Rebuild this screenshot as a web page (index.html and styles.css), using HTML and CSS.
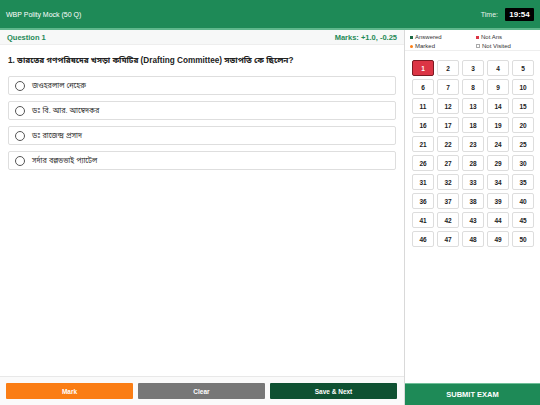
FILE: index.html
```html
<!DOCTYPE html>
<html>
<head>
<meta charset="utf-8">
<link rel="stylesheet" href="styles.css">
</head>
<body>
<div class="app">
  <header class="topbar">
    <div class="title">WBP Polity Mock (50 Q)</div>
    <div class="timer"><span class="time-label">Time:</span><span class="time-box">19:54</span></div>
  </header>
  <div class="main">
    <section class="qpanel">
      <div class="qhead"><span>Question 1</span><span>Marks: +1.0, -0.25</span></div>
      <div class="qbody">
        <div class="qtext">1. ভারতের গণপরিষদের খসড়া কমিটির (Drafting Committee) সভাপতি কে ছিলেন?</div>
        <div class="options">
          <label class="opt"><span class="radio"></span><span>জওহরলাল নেহেরু</span></label>
          <label class="opt"><span class="radio"></span><span>ডঃ বি. আর. আম্বেদকর</span></label>
          <label class="opt"><span class="radio"></span><span>ডঃ রাজেন্দ্র প্রসাদ</span></label>
          <label class="opt"><span class="radio"></span><span>সর্দার বল্লভভাই প্যাটেল</span></label>
        </div>
      </div>
      <div class="actions">
        <button class="btn mark">Mark</button>
        <button class="btn clear">Clear</button>
        <button class="btn next">Save &amp; Next</button>
      </div>
    </section>
    <aside class="side">
      <div class="legend">
        <div><span class="dot d-ans"></span>Answered</div>
        <div><span class="dot d-not"></span>Not Ans</div>
        <div><span class="dot d-mark"></span>Marked</div>
        <div><span class="dot d-nv"></span>Not Visited</div>
      </div>
      <div class="grid">
        <button class="qb current">1</button><button class="qb">2</button><button class="qb">3</button><button class="qb">4</button><button class="qb">5</button>
        <button class="qb">6</button><button class="qb">7</button><button class="qb">8</button><button class="qb">9</button><button class="qb">10</button>
        <button class="qb">11</button><button class="qb">12</button><button class="qb">13</button><button class="qb">14</button><button class="qb">15</button>
        <button class="qb">16</button><button class="qb">17</button><button class="qb">18</button><button class="qb">19</button><button class="qb">20</button>
        <button class="qb">21</button><button class="qb">22</button><button class="qb">23</button><button class="qb">24</button><button class="qb">25</button>
        <button class="qb">26</button><button class="qb">27</button><button class="qb">28</button><button class="qb">29</button><button class="qb">30</button>
        <button class="qb">31</button><button class="qb">32</button><button class="qb">33</button><button class="qb">34</button><button class="qb">35</button>
        <button class="qb">36</button><button class="qb">37</button><button class="qb">38</button><button class="qb">39</button><button class="qb">40</button>
        <button class="qb">41</button><button class="qb">42</button><button class="qb">43</button><button class="qb">44</button><button class="qb">45</button>
        <button class="qb">46</button><button class="qb">47</button><button class="qb">48</button><button class="qb">49</button><button class="qb">50</button>
      </div>
      <button class="submit">SUBMIT EXAM</button>
    </aside>
  </div>
</div>
</body>
</html>
```
FILE: styles.css
```css
* { box-sizing: border-box; }
html, body { margin: 0; padding: 0; }
body {
  font-family: "Liberation Sans", Arial, "Noto Sans Bengali", "Noto Sans", sans-serif;
  background: #fff;
  color: #222;
  width: 540px;
  height: 405px;
  overflow: hidden;
}
.app { display: flex; flex-direction: column; height: 405px; }
.topbar {
  height: 30px;
  flex: none;
  background: #1e8a57;
  border-bottom: 2px solid #5fb88c;
  display: flex;
  align-items: center;
  justify-content: space-between;
  padding: 0 6px 0 6px;
  color: #fff;
}
.title { font-size: 7px; }
.timer { display: flex; align-items: center; gap: 7px; }
.time-label { font-size: 7px; color: #e6f2ec; }
.time-box {
  background: #000;
  color: #fff;
  font-weight: bold;
  font-size: 8px;
  width: 29px;
  height: 13px;
  display: flex;
  align-items: center;
  justify-content: center;
  border-radius: 1px;
}
.main { flex: 1; display: flex; min-height: 0; }
.qpanel {
  width: 405px;
  flex: none;
  border-right: 1px solid #d9d9d9;
  display: flex;
  flex-direction: column;
}
.qhead {
  height: 15px;
  background: #f7f8f8;
  border-bottom: 1px solid #eee;
  display: flex;
  justify-content: space-between;
  align-items: center;
  padding: 0 7px;
  font-size: 7.5px;
  font-weight: bold;
  color: #1e8a57;
}
.qbody { flex: 1; padding: 10px 8px 0 8px; }
.qtext { font-size: 8.2px; font-weight: bold; color: #222; margin-bottom: 10px; }
.options { display: flex; flex-direction: column; gap: 6px; }
.opt {
  height: 19px;
  border: 1px solid #dedede;
  border-radius: 2px;
  display: flex;
  align-items: center;
  padding-left: 6px;
  font-size: 7.3px;
  color: #333;
  gap: 7px;
}
.radio {
  width: 10px;
  height: 10px;
  border: 1px solid #555;
  border-radius: 50%;
}
.actions {
  height: 29px;
  border-top: 1px solid #e8e8e8;
  background: #fafafa;
  display: flex;
  gap: 5px;
  padding: 6px 7px 6px 6px;
}
.btn {
  flex: 1;
  border: none;
  border-radius: 1px;
  color: #fff;
  font-family: inherit;
  font-weight: bold;
  font-size: 6.5px;
  height: 16px;
  padding: 0;
}
.mark { background: #fa7d14; }
.clear { background: #777; }
.next { background: #0f5132; }
.side { flex: 1; display: flex; flex-direction: column; }
.legend {
  display: grid;
  grid-template-columns: 66px 1fr;
  row-gap: 1px;
  padding: 3px 0 0 5px;
  font-size: 6px;
  color: #333;
  height: 21px;
  border-bottom: 1px solid #eee;
}
.legend div { display: flex; align-items: center; gap: 2px; }
.dot { width: 3px; height: 3px; display: inline-block; }
.d-ans { background: #1e6b45; }
.d-not { background: #dc3545; }
.d-mark { background: #fd7e14; border-radius: 50%; }
.d-nv { border: 1px solid #aaa; width: 4px; height: 4px; }
.grid {
  flex: 1;
  display: grid;
  grid-template-columns: repeat(5, 22px);
  grid-auto-rows: 16px;
  column-gap: 3px;
  row-gap: 3px;
  padding: 9px 0 0 7px;
  align-content: start;
}
.qb {
  border: 1px solid #ddd;
  background: #fff;
  border-radius: 2px;
  font-family: inherit;
  font-size: 6.5px;
  font-weight: bold;
  color: #222;
  padding: 0;
}
.qb.current { background: #dc3545; color: #fff; border: 1px solid #7a1a22; }
.submit {
  height: 22px;
  border: none;
  border-top: 1px solid #6fbf98;
  background: #1e8a57;
  color: #fff;
  font-family: inherit;
  font-weight: bold;
  font-size: 7.5px;
}
```
